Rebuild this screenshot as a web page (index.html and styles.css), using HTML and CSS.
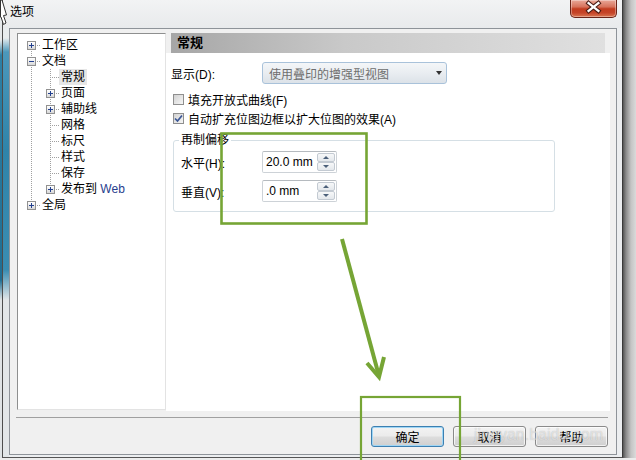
FILE: index.html
```html
<!DOCTYPE html>
<html lang="zh-CN">
<head>
    <meta charset="UTF-8">
    <title>选项</title>
    <link rel="stylesheet" href="styles.css">
</head>
<body>
<div class="screen">
    <div class="window">
        <div class="titlebar">
            <span class="title">选项</span>
            <button class="close-btn" aria-label="关闭">
                <svg width="47" height="18" viewBox="0 0 47 18">
                    <path d="M19 4 L29 12 M29 4 L19 12" stroke="#4a1c14" stroke-width="4.5" stroke-linecap="square" fill="none"/>
                    <path d="M19 4 L29 12 M29 4 L19 12" stroke="#fff" stroke-width="2.4" stroke-linecap="square" fill="none"/>
                </svg>
            </button>
        </div>
        <div class="client">
            <div class="main">
                <!-- arbre de navigation -->
                <div class="tree">
                    <ul class="tree-list">
                        <li><div class="row"><span class="exp"></span><span class="lbl">工作区</span></div></li>
                        <li><div class="row"><span class="exp open"></span><span class="lbl">文档</span></div>
                            <ul>
                                <li><div class="row"><span class="lbl sel">常规</span></div></li>
                                <li><div class="row"><span class="exp"></span><span class="lbl">页面</span></div></li>
                                <li><div class="row"><span class="exp"></span><span class="lbl">辅助线</span></div></li>
                                <li><div class="row"><span class="lbl">网格</span></div></li>
                                <li><div class="row"><span class="lbl">标尺</span></div></li>
                                <li><div class="row"><span class="lbl">样式</span></div></li>
                                <li><div class="row"><span class="lbl">保存</span></div></li>
                                <li><div class="row"><span class="exp"></span><span class="lbl">发布到 <span class="web">Web</span></span></div></li>
                            </ul>
                        </li>
                        <li><div class="row"><span class="exp"></span><span class="lbl">全局</span></div></li>
                    </ul>
                </div>
                <div class="panel">
                    <div class="panel-head">常规</div>
                    <div class="panel-body">
                        <div class="field-row">
                            <span class="field-label">显示(D):</span>
                            <div class="select">使用叠印的增强型视图<span class="caret"></span></div>
                        </div>
                        <div class="check"><span class="box"></span>填充开放式曲线(F)</div>
                        <div class="check">
                            <span class="box">
                                <svg width="9" height="9" viewBox="0 0 9 9"><path d="M1 4.5 L3.5 7 L8 1.5" stroke="#3b5796" stroke-width="1.7" fill="none"/></svg>
                            </span>自动扩充位图边框以扩大位图的效果(A)
                        </div>
                        <fieldset class="group">
                            <legend>再制偏移</legend>
                            <div class="spin-row">
                                <span class="spin-label">水平(H):</span>
                                <div class="spin">
                                    <span class="spin-val">20.0 mm</span>
                                    <span class="spin-btns"><span class="up"></span><span class="down"></span></span>
                                </div>
                            </div>
                            <div class="spin-row">
                                <span class="spin-label">垂直(V):</span>
                                <div class="spin">
                                    <span class="spin-val">.0 mm</span>
                                    <span class="spin-btns"><span class="up"></span><span class="down"></span></span>
                                </div>
                            </div>
                        </fieldset>
                    </div>
                </div>
            </div>
            <div class="separator"></div>
            <div class="buttons">
                <button class="btn default">确定</button>
                <button class="btn">取消</button>
                <button class="btn">帮助</button>
            </div>
        </div>
    </div>

    <svg class="cursor" width="8" height="26" viewBox="0 0 8 26">
        <polygon points="0.5,0 2,0 6.5,15 3.5,15.5 6,23 3.5,24.5 1,17 0.5,17" fill="#fff" stroke="#333" stroke-width="1"/>
    </svg>
    <div class="watermark">jingyan.baidu.com</div>

    <!-- annotations vertes -->
    <svg class="annot" width="636" height="460" viewBox="0 0 636 460">
        <rect x="221.5" y="133.5" width="145" height="90" fill="none" stroke="#76a535" stroke-width="2.6"/>
        <path d="M342 239 L379 376" stroke="#76a535" stroke-width="4" fill="none"/>
        <path d="M367 363 L379 377 L384 357" stroke="#76a535" stroke-width="4" fill="none" stroke-linejoin="miter"/>
        <rect x="361" y="397" width="99" height="80" fill="none" stroke="#76a535" stroke-width="2.2"/>
    </svg>
</div>
</body>
</html>
```

FILE: styles.css
```css
body {
    margin: 0;
    font-family: "Liberation Sans", "Noto Sans CJK SC", sans-serif;
    font-size: 12px;
    color: #000;
}
.screen {
    position: relative;
    width: 636px;
    height: 460px;
    overflow: hidden;
    background:
        linear-gradient(#ececec, #ececec) 0 458px / 100% 2px no-repeat,
        linear-gradient(#e6e9eb 0, #e6e9eb 40px, #2d80a5 55px, #1f6e93 280px, #dfe3e5 300px) 0 0 / 2px 100% no-repeat,
        linear-gradient(to right, #555 623px, #8a8a8a 626px, #c4c4c4 631px, #dadada 636px);
}
.window {
    width: 619px;
    height: 457px;
    margin-left: 2px;
    border-left: 1px solid #4d4d4d;
    border-right: 1px solid #3a3a3a;
    border-bottom: 1px solid #555;
    display: flex;
    flex-direction: column;
    background:
        linear-gradient(#e8ecee 0, #e8ecee 38px, #4b98bb 52px, #2f84aa 150px, #3a8db2 270px, #e2e6e8 300px) 0 0 / 6px 100% no-repeat,
        #eceef0;
}
.titlebar {
    height: 28px;
    display: flex;
    align-items: flex-start;
    padding-left: 7px;
    background: linear-gradient(#f2f3f4, #e8eaec);
    flex-shrink: 0;
}
.title {
    line-height: 24px;
    font-size: 12px;
}
.close-btn {
    margin-left: auto;
    margin-right: 5px;
    width: 47px;
    height: 18px;
    padding: 0;
    border: 1px solid #6a2418;
    border-top: none;
    border-radius: 0 0 5px 5px;
    background: linear-gradient(#e9a898 0, #d7735c 40%, #c23c1f 52%, #c54428 75%, #da7550 100%);
    box-shadow: inset 0 0 0 1px rgba(255, 255, 255, 0.35);
    display: flex;
}
.close-btn svg {
    margin: -1px 0 0 -1px;
}
.client {
    box-sizing: border-box;
    width: 608px;
    height: 427px;
    margin-left: 6px;
    border: 1px solid #8e9399;
    background: #f0f0f0;
    padding: 4px 6px 0 7px;
    display: flex;
    flex-direction: column;
}
.main {
    display: flex;
    height: 378px;
    flex-shrink: 0;
}
.tree {
    box-sizing: border-box;
    width: 149px;
    height: 377px;
    background: #fff;
    border: 1px solid;
    border-color: #8e8f8f #e3e3e3 #e3e3e3 #8e8f8f;
    padding-top: 3px;
}
.tree ul {
    list-style: none;
    margin: 0;
    padding: 0;
}
.tree ul ul {
    padding-left: 19px;
}
.tree li {
    background: repeating-linear-gradient(#a0a0a0 0, #a0a0a0 1px, transparent 1px, transparent 2px) 13px 0 / 1px 100% no-repeat;
}
.tree li:first-child {
    background-position: 13px 8px;
}
.tree ul ul li:first-child {
    background-position: 13px 0;
}
.tree li:last-child {
    background-size: 1px 8px;
    background-position: 13px 0;
}
.row {
    display: flex;
    align-items: center;
    height: 16px;
    line-height: 16px;
    padding-left: 24px;
    background: repeating-linear-gradient(to right, #a0a0a0 0, #a0a0a0 1px, transparent 1px, transparent 2px) 13px 8px / 10px 1px no-repeat;
}
.exp {
    box-sizing: border-box;
    flex-shrink: 0;
    width: 9px;
    height: 9px;
    margin: 1px 6px 0 -15px;
    border: 1px solid #919191;
    background:
        linear-gradient(#23408f, #23408f) center / 5px 1px no-repeat,
        linear-gradient(#23408f, #23408f) center / 1px 5px no-repeat,
        linear-gradient(#fff, #d8d8d8);
}
.exp.open {
    background:
        linear-gradient(#23408f, #23408f) center / 5px 1px no-repeat,
        linear-gradient(#fff, #d8d8d8);
}
.lbl {
    white-space: nowrap;
}
.sel {
    background: #e6e6e6;
    margin-left: -2px;
    padding: 0 2px;
}
.web {
    color: #27408e;
}
.panel {
    flex: 1;
    display: flex;
    flex-direction: column;
}
.panel-head {
    height: 20px;
    margin: 0 5px;
    padding-left: 6px;
    line-height: 20px;
    font-size: 13px;
    font-weight: bold;
    background: linear-gradient(to right, #a6a6a6, #c9c9c9 40%, #e0e0e0);
    flex-shrink: 0;
}
.panel-body {
    flex: 1;
    background: #fff;
    padding-top: 9px;
}
.field-row {
    display: flex;
    align-items: center;
    margin-left: 5px;
    height: 22px;
}
.field-label {
    width: 91px;
}
.select {
    box-sizing: border-box;
    width: 185px;
    height: 22px;
    display: flex;
    align-items: center;
    padding-left: 6px;
    color: #6e6e6e;
    border: 1px solid #a9c2da;
    border-radius: 3px;
    background: linear-gradient(#f4f6f8, #e9edf1 50%, #dce2e8);
}
.caret {
    margin-left: auto;
    margin-right: 4px;
    width: 0;
    height: 0;
    border-left: 3.5px solid transparent;
    border-right: 3.5px solid transparent;
    border-top: 4px solid #333;
}
.check {
    display: flex;
    align-items: center;
    height: 19px;
    margin-left: 7px;
}
.field-row + .check {
    margin-top: 6px;
}
.box {
    box-sizing: border-box;
    width: 11px;
    height: 11px;
    margin-right: 4px;
    border: 1px solid #8f8f8f;
    background: linear-gradient(135deg, #d2d2d2, #f6f6f6);
    display: flex;
    align-items: center;
    justify-content: center;
}
.group {
    box-sizing: border-box;
    width: 382px;
    margin: 4px 0 0 7px;
    padding: 3px 0 9px 7px;
    border: 1px solid #d5dfe5;
    border-radius: 3px;
    min-width: 0;
}
.group legend {
    padding: 0 2px;
    margin-left: -2px;
    line-height: 16px;
}
.spin-row {
    display: flex;
    align-items: center;
    height: 22px;
}
.spin-row + .spin-row {
    margin-top: 7px;
}
.spin-label {
    width: 81px;
}
.spin {
    box-sizing: border-box;
    width: 75px;
    height: 22px;
    border: 1px solid #cdd2d7;
    border-top-color: #b5babf;
    border-radius: 2px;
    display: flex;
    align-items: center;
    padding-left: 3px;
}
.spin-btns {
    margin-left: auto;
    margin-right: 1px;
    display: flex;
    flex-direction: column;
}
.spin-btns span {
    box-sizing: border-box;
    width: 18px;
    height: 9px;
    border: 1px solid #c3cad2;
    border-radius: 2px;
    background:
        linear-gradient(#f7f8f9, #e4e8ec);
    display: flex;
    align-items: center;
    justify-content: center;
}
.spin-btns .up::before,
.spin-btns .down::before {
    content: "";
    border-left: 3px solid transparent;
    border-right: 3px solid transparent;
}
.spin-btns .up::before {
    border-bottom: 3px solid #4c607a;
}
.spin-btns .down::before {
    border-top: 3px solid #4c607a;
}
.separator {
    height: 0;
    margin: 6px 2px 0 -1px;
    border-top: 1px solid #a0a0a0;
}
.buttons {
    display: flex;
    justify-content: flex-end;
    gap: 9px;
    margin: 8px 2px 0 0;
}
.btn {
    box-sizing: border-box;
    width: 73px;
    height: 21px;
    padding: 0;
    font-family: "Liberation Sans", "Noto Sans CJK SC", sans-serif;
    font-size: 12px;
    color: #000;
    border: 1px solid #8a8a8a;
    border-radius: 3px;
    background: linear-gradient(#f3f3f3 0, #ebebeb 48%, #dddddd 52%, #cfcfcf 100%);
    box-shadow: inset 0 0 0 1px rgba(255, 255, 255, 0.7);
}
.btn.default {
    border-color: #3c7fb1;
    box-shadow: inset 0 0 0 1px #9fd6f5;
}
.cursor {
    position: absolute;
    left: 0;
    top: 0;
}
.watermark {
    position: absolute;
    left: 474px;
    top: 426px;
    font-family: "Liberation Sans", sans-serif;
    font-size: 16px;
    color: rgba(255, 255, 255, 0.55);
    text-shadow: 0 0 1px rgba(0, 0, 0, 0.25);
    pointer-events: none;
}
.annot {
    position: absolute;
    left: 0;
    top: 0;
    pointer-events: none;
}
```
